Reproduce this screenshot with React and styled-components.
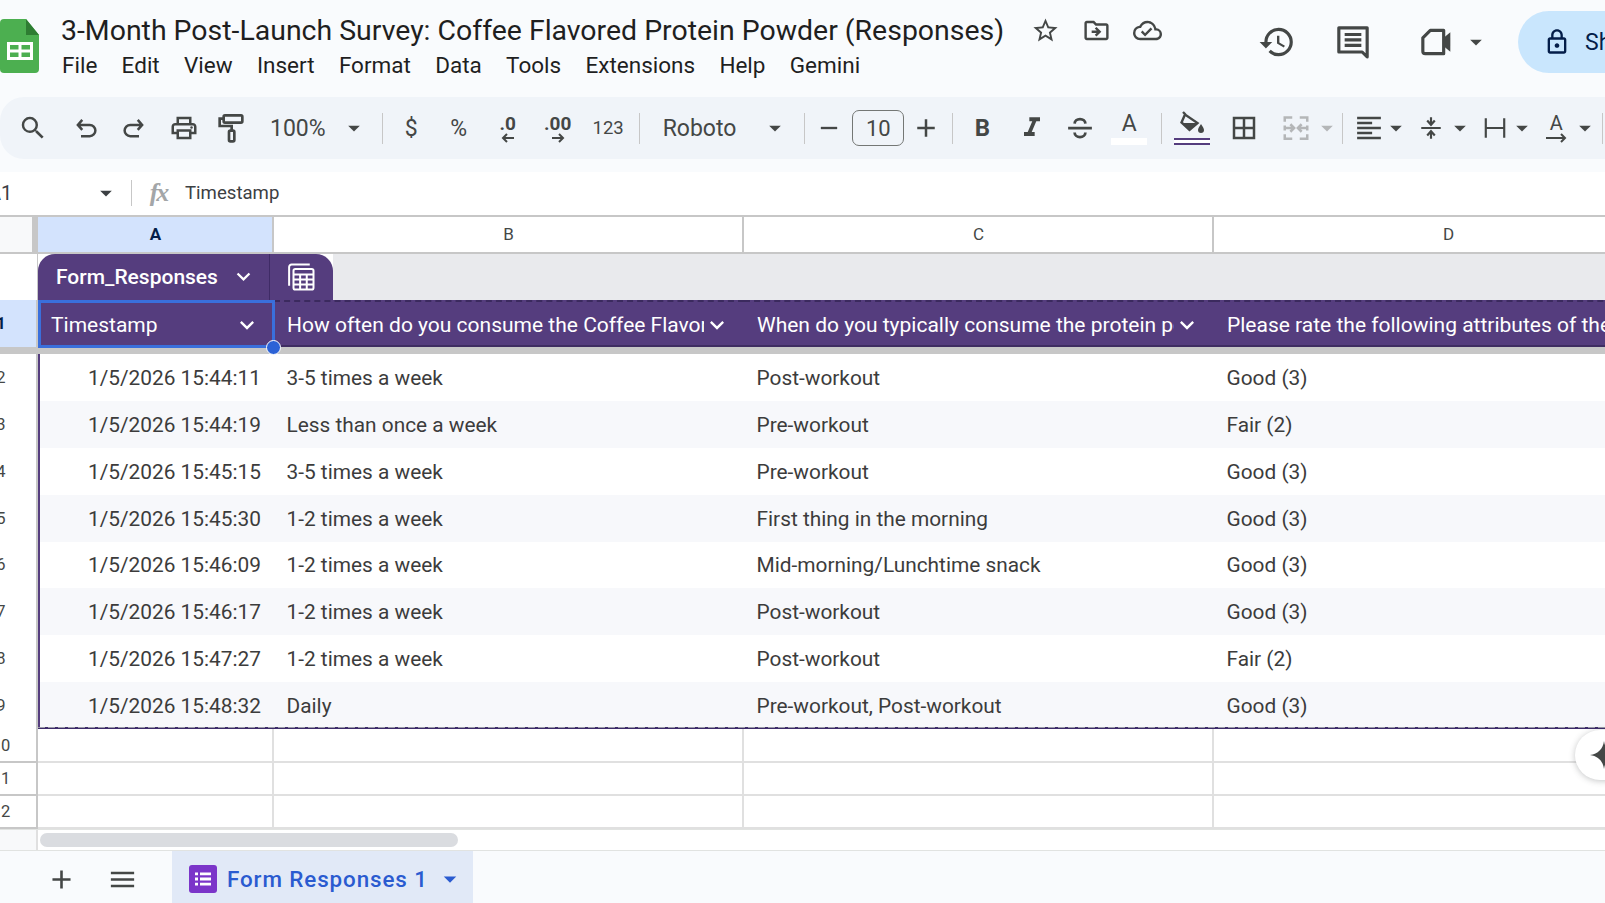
import React from "react";
import styled, { createGlobalStyle } from "styled-components";
import {
  MdSearch, MdOutlinePrint, MdBorderAll, MdFormatItalic, MdHistory, MdStarBorder,
  MdOutlineDriveFileMove, MdOutlineCloudDone, MdOutlineLock, MdAdd, MdMenu, MdArrowDropDown,
  MdKeyboardArrowDown, MdRemove,
} from "react-icons/md";

const INK = "#444746";
const PURPLE = "#553d7e";

const Global = createGlobalStyle`
  html, body { margin: 0; padding: 0; background: #fff; overflow: hidden; }
  * { box-sizing: border-box; }
`;

const Page = styled.div`
  position: relative; width: 1605px; height: 903px; overflow: hidden;
  background: #fff; font-family: Roboto, "Liberation Sans", sans-serif; color: #1f1f1f;
  display: flex; flex-direction: column;
`;

/* ---------- header ---------- */
const Chrome = styled.div`background: #f9fbfd; height: 172px; flex-shrink: 0;`;
const TitleBar = styled.header`display: flex; align-items: flex-start; height: 97px;`;
const Logo = styled.svg`width: 39px; height: 54px; margin-top: 19px; flex-shrink: 0;`;
const TitleColumn = styled.div`margin-left: 22px; padding-top: 9px; flex-shrink: 0;`;
const TitleRow = styled.div`display: flex; align-items: center; height: 42px;`;
const DocTitle = styled.h1`
  margin: 0; font-size: 28.45px; font-weight: 400; color: #1f1f1f; white-space: nowrap;
`;
const TitleIcons = styled.div`display: flex; align-items: center; margin-left: 27px; gap: 22px; color: ${INK}; font-size: 29px;
  svg { display: block; }
`;
const MenuRow = styled.nav`display: flex; gap: 24.300px; font-size: 22.5px; color: #1f1f1f; height: 30px; align-items: center; margin-top: -1px; margin-left: 1px;`;
const MenuItem = styled.span`white-space: nowrap;`;
const Actions = styled.div`
  margin-left: auto; margin-right: -63px; display: flex; align-items: center; height: 62px; margin-top: 11px; flex-shrink: 0; color: ${INK};
`;
const ActionIcon = styled.span`
  display: flex; align-items: center; justify-content: center; width: ${p => p.$w}px; margin-left: ${p => p.$ml || 0}px; font-size: 38px;
  svg { flex-shrink: 0; }
`;
const SharePill = styled.div`
  width: 150px; height: 62px; border-radius: 31px 0 0 31px; background: #c9e6fd; display: flex; align-items: center;
  margin-left: 33px; padding-left: 25px; gap: 14px; color: #041e49; font-size: 23px; font-weight: 400;
`;

/* ---------- toolbar ---------- */
const Toolbar = styled.div`
  display: flex; align-items: center; height: 62px; padding-left: 9px; background: #f0f4f9;
  border-top-left-radius: 24px; border-bottom-left-radius: 24px; white-space: nowrap; color: ${INK};
`;
const Slot = styled.span`
  display: flex; flex-direction: ${p => (p.$stack ? "column" : "row")}; align-items: center; justify-content: center;
  flex-shrink: 0; width: ${p => p.$w}px; height: 62px; font-size: ${p => p.$fs || 30}px; line-height: 1;
  margin-left: ${p => p.$ml || 0}px; padding-left: ${p => p.$pl || 0}px; padding-right: ${p => p.$pr || 0}px;
  color: ${p => (p.$off ? "#b4b6b8" : INK)}; svg { display: block; flex-shrink: 0; }
`;
const SlotText = styled.span`font-size: ${p => p.$fs || 23}px; font-weight: ${p => p.$fw || 400}; color: ${INK}; line-height: 1;`;
const Sep = styled.span`flex-shrink: 0; width: 1px; height: 31px; background: #c7c7c7; margin-left: ${p => p.$ml || 0}px;`;
const FontSizeBox = styled.span`
  flex-shrink: 0; width: 52px; height: 36px; border: 1px solid #747775; border-radius: 7px; display: flex; align-items: center; justify-content: center;
  font-size: 22px; color: ${INK};
`;
const Underline = styled.span`
  display: block; width: 36px; height: 7px; margin-top: 3px;
  border-top: 2px solid ${p => p.$c}; border-bottom: 2px solid ${p => p.$c}; background: #fff;
`;

/* ---------- formula bar ---------- */
const FormulaBar = styled.div`display: flex; align-items: center; height: 43px; flex-shrink: 0; background: #fff; font-size: 18.6px; color: #3c4043; padding-bottom: 1px;`;
const NameBox = styled.div`width: 131px; display: flex; align-items: center; flex-shrink: 0; overflow: hidden;`;
const NameText = styled.span`margin-left: -12px; width: 104px; flex-shrink: 0; font-size: 20px;`;
const FormulaSep = styled.span`width: 1px; height: 26px; background: #c7c7c7; flex-shrink: 0;`;
const Fx = styled.span`
  width: 53px; text-align: center; flex-shrink: 0; font-family: "Liberation Serif", serif; font-style: italic; font-size: 26px; color: #a3a6a8; font-weight: 700; letter-spacing: -2px;
`;

/* ---------- grid ---------- */
const Columns = "38px 236px 470px 470px 470px";
const HeadRow = styled.div`
  display: grid; grid-template-columns: ${Columns}; height: 39px; flex-shrink: 0;
  border-top: 2px solid #c7c7c7; border-bottom: 2px solid #c7c7c7; width: 1684px;
`;
const Corner = styled.div`background: #f8f9fa; border-right: 6px solid #c7c7c7;`;
const ColHead = styled.div`
  display: flex; align-items: center; justify-content: center; font-size: 17px; padding: 0 0 2px 1px;
  background: ${p => (p.$on ? "#d3e3fd" : "#fff")}; color: ${p => (p.$on ? "#041e49" : INK)}; font-weight: ${p => (p.$on ? 700 : 400)};
  border-right: 2px solid #c7c7c7;
`;
const TableStrip = styled.div`display: flex; height: 46px; flex-shrink: 0;`;
const StripGutter = styled.div`width: 38px; flex-shrink: 0; background: #fff; border-right: 1px solid #c7c7c7;`;
const StripFill = styled.div`flex: 1; background: #e9eaed;`;
const TableTab = styled.div`
  display: flex; height: 46px; background: ${PURPLE}; color: #fff; border-radius: 17px 17px 0 0; flex-shrink: 0; width: 295px;
`;
const TabName = styled.div`
  width: 232px; display: flex; align-items: center; padding: 0 0 1px 18px; font-size: 21px; font-weight: 500; border-right: 1px solid #3f2b66; gap: 12px;
  svg { font-size: 27px; flex-shrink: 0; }
`;
const TabCalc = styled.div`flex: 1; display: flex; align-items: center; justify-content: center; padding-right: 2px;`;

const Row = styled.div`
  display: grid; grid-template-columns: ${Columns}; height: ${p => p.$h}px; flex-shrink: 0; width: 1684px;
`;
const RowHead = styled.div`
  display: flex; align-items: center; overflow: hidden; background: ${p => (p.$on ? "#d3e3fd" : "#fff")};
  border-right: 2px solid #c7c7c7; font-size: 16.5px; color: ${p => (p.$on ? "#041e49" : INK)}; font-weight: ${p => (p.$on ? 700 : 400)};
  border-bottom: ${p => (p.$line ? "2px solid #c7c7c7" : "none")};
`;
const RowLabel = styled.span`margin-left: -19px; width: 40px; flex-shrink: 0; text-align: center;`;
const HeaderCell = styled.div`
  display: flex; align-items: center; background: ${PURPLE}; color: #fff; font-size: 21px; padding-left: 13px; padding-top: 3px; min-width: 0;
  border-top: 2px dashed #3b2a5e; border-bottom: 2px solid #3f2d62;
`;
const HeaderLabel = styled.span`flex: 1; overflow: hidden; white-space: nowrap; min-width: 0;`;
const HeaderChevron = styled.span`
  width: 40px; flex-shrink: 0; display: flex; align-items: center; justify-content: center; font-size: 28px; padding-right: 14px; svg { display: block; flex-shrink: 0; }
`;
const Selection = styled.div`
  position: absolute; left: 38px; top: 300px; width: 237px; height: 48px; border: 3px solid #3a6fdc; pointer-events: none;
`;
const SelectionDot = styled.div`
  position: absolute; left: 266px; top: 340px; width: 15px; height: 15px; border-radius: 50%; background: #2c62d6; border: 1.5px solid #fff;
`;
const FreezeBar = styled.div`height: 7px; background: #c7c7c7; flex-shrink: 0;`;
const DataCell = styled.div`
  display: flex; align-items: center; font-size: 20.85px; color: #3c3c3c; white-space: nowrap; overflow: hidden; min-width: 0;
  background: ${p => (p.$alt ? "#f7f8fb" : "#fff")};
  justify-content: ${p => (p.$right ? "flex-end" : "flex-start")};
  padding: 1px ${p => (p.$right ? 13 : 0)}px 0 ${p => (p.$right ? 0 : 12.5)}px;
  border-left: ${p => (p.$edge ? `2px solid ${PURPLE}` : "none")};
`;
const TableEnd = styled.div`
  height: 2px; flex-shrink: 0; margin-left: 38px; margin-top: -2px; position: relative;
  background: linear-gradient(#3d2b6b, #3d2b6b) bottom / 100% 1px no-repeat, repeating-linear-gradient(90deg, #9a9aa5 0 7px, #3d2b6b 7px 10px);
`;
const EmptyCell = styled.div`border-right: 2px solid #e0e0e0; border-bottom: 2px solid #e0e0e0;`;
const ScrollStrip = styled.div`
  display: flex; height: 22px; flex-shrink: 0; border-bottom: 1px solid #e1e3e1; border-top: 1px solid #e1e3e1;
`;
const ScrollGutter = styled.div`width: 38px; background: #f8f9fa; border-right: 2px solid #e0e0e0; flex-shrink: 0;`;
const ScrollThumb = styled.div`width: 418px; height: 14px; margin: 3px 0 0 2px; border-radius: 7px; background: #dadce0;`;
const SheetBar = styled.footer`flex: 1; background: #f9fbfd; display: flex; align-items: stretch; color: ${INK}; padding-left: 31px;`;
const SheetButton = styled.span`width: ${p => p.$w}px; display: flex; align-items: center; justify-content: center; flex-shrink: 0; font-size: 31px; padding-top: 4px; svg { display: block; }`;
const SheetTab = styled.div`
  width: 301px; margin-left: 20px; background: #e1e9f7; display: flex; align-items: center; padding: 3px 0 0 17px; gap: 10px; color: #2a5bd0;
  font-size: 22.4px; font-weight: 500; letter-spacing: 0.9px; white-space: nowrap;
`;
const FormBadge = styled.svg`width: 28px; height: 28px; flex-shrink: 0;`;
const TabCaret = styled.span`display: flex; font-size: 30px; margin-left: -3px;`;
const GeminiFab = styled.div`
  position: absolute; left: 1575px; top: 730px; width: 60px; height: 50px; border-radius: 25px; background: #fff;
  box-shadow: 0 1px 6px rgba(60,64,67,.3); display: flex; align-items: center; padding-left: 15px;
`;

const Glyph = ({ s = 30, sw = 2, children }) => (
  <svg width={s} height={s} viewBox="0 0 24 24" fill="none" stroke="currentColor" strokeWidth={sw}>{children}</svg>
);

const Caret = ({ s = 28 }) => <MdArrowDropDown size={s} />;

const rows = [
  ["1/5/2026 15:44:11", "3-5 times a week", "Post-workout", "Good (3)"],
  ["1/5/2026 15:44:19", "Less than once a week", "Pre-workout", "Fair (2)"],
  ["1/5/2026 15:45:15", "3-5 times a week", "Pre-workout", "Good (3)"],
  ["1/5/2026 15:45:30", "1-2 times a week", "First thing in the morning", "Good (3)"],
  ["1/5/2026 15:46:09", "1-2 times a week", "Mid-morning/Lunchtime snack", "Good (3)"],
  ["1/5/2026 15:46:17", "1-2 times a week", "Post-workout", "Good (3)"],
  ["1/5/2026 15:47:27", "1-2 times a week", "Post-workout", "Fair (2)"],
  ["1/5/2026 15:48:32", "Daily", "Pre-workout, Post-workout", "Good (3)"],
];

const headers = [
  "Timestamp",
  "How often do you consume the Coffee Flavored Protein Powder?",
  "When do you typically consume the protein powder?",
  "Please rate the following attributes of the Coffee Flavored Protein Powder",
];

export default function App() {
  return (
    <Page>
      <Global />
      <Chrome>
        <TitleBar>
          <Logo viewBox="0 0 39 54">
            <path d="M0 4a4 4 0 0 1 4-4h22l13 16v34a4 4 0 0 1-4 4H4a4 4 0 0 1-4-4z" fill="#4caf50" />
            <path d="M26 0l13 16H26z" fill="#2e7d32" />
            <path d="M7 23h26v18H7z" fill="#fff" />
            <path d="M10 26h8.500v4.500H10zM21.500 26H30v4.500h-8.500zM10 33.500h8.500V38H10zM21.500 33.500H30V38h-8.500z" fill="#4caf50" />
          </Logo>
          <TitleColumn>
            <TitleRow>
              <DocTitle>3-Month Post-Launch Survey: Coffee Flavored Protein Powder (Responses)</DocTitle>
              <TitleIcons>
                <MdStarBorder />
                <MdOutlineDriveFileMove />
                <MdOutlineCloudDone />
              </TitleIcons>
            </TitleRow>
            <MenuRow>
              {["File", "Edit", "View", "Insert", "Format", "Data", "Tools", "Extensions", "Help", "Gemini"].map(m => (
                <MenuItem key={m}>{m}</MenuItem>
              ))}
            </MenuRow>
          </TitleColumn>
          <Actions>
            <ActionIcon $w={76}><MdHistory /></ActionIcon>
            <ActionIcon $w={76}>
              <svg width="40" height="40" viewBox="0 0 24 24" fill="none" stroke="currentColor" strokeWidth="1.900">
                <path d="M3.500 3.500h17V21l-3-3h-14z" strokeLinejoin="round" />
                <path d="M7 7.500h10M7 10.700h10M7 14h10" />
              </svg>
            </ActionIcon>
            <ActionIcon $w={60} $ml={16}>
              <svg width="40" height="40" viewBox="0 0 24 24" fill="none" stroke="currentColor" strokeWidth="1.900">
                <path d="M8 5h8v14H5a1.500 1.500 0 0 1-1.500-1.500V9.500z" strokeLinejoin="round" />
                <path d="M16 9.500l4-3.300v11.600l-4-3.300z" fill="currentColor" stroke="none" />
              </svg>
            </ActionIcon>
            <ActionIcon $w={18}><Caret /></ActionIcon>
            <SharePill>
              <MdOutlineLock size={28} style={{ flexShrink: 0 }} />
              Share
            </SharePill>
          </Actions>
        </TitleBar>
        <Toolbar>
          <Slot $w={48}><MdSearch /></Slot>
          <Slot $w={58}>
            <Glyph><path d="M9 5.500L5.500 9.500l3.500 4M5.500 9.500H15a4.500 4.500 0 0 1 0 9H8" /></Glyph>
          </Slot>
          <Slot $w={38}>
            <Glyph><path d="M15 5.500l3.500 4-3.500 4M18.500 9.500H9a4.500 4.500 0 0 0 0 9h7" /></Glyph>
          </Slot>
          <Slot $w={62}><MdOutlinePrint /></Slot>
          <Slot $w={32}>
            <Glyph s={32}>
              <rect x="6.500" y="2.500" width="14" height="5.500" rx="1" />
              <path d="M6.500 5H3.500v5.500h9V14" />
              <rect x="10.500" y="14" width="4" height="8" rx="1" />
            </Glyph>
          </Slot>
          <Slot $w={23} />
          <SlotText>100%</SlotText>
          <Slot $w={56}><Caret /></Slot>
          <Sep />
          <Slot $w={57}><SlotText>$</SlotText></Slot>
          <Slot $w={38}><SlotText>%</SlotText></Slot>
          <Slot $w={60} $stack>
            <SlotText $fs={19} $fw={700}>.0</SlotText>
            <svg width="16" height="10" viewBox="0 0 16 10" fill="none" stroke="currentColor" strokeWidth="2"><path d="M14 5H3M7 1L3 5l4 4" /></svg>
          </Slot>
          <Slot $w={40} $stack>
            <SlotText $fs={19} $fw={700}>.00</SlotText>
            <svg width="16" height="10" viewBox="0 0 16 10" fill="none" stroke="currentColor" strokeWidth="2"><path d="M2 5h11M9 1l4 4-4 4" /></svg>
          </Slot>
          <Slot $w={61}><SlotText $fs={18.5}>123</SlotText></Slot>
          <Sep />
          <Slot $w={23} />
          <SlotText>Roboto</SlotText>
          <Slot $w={68} $pl={10}><Caret /></Slot>
          <Sep />
          <Slot $w={47} $fs={28}><MdRemove /></Slot>
          <FontSizeBox>10</FontSizeBox>
          <Slot $w={48} $pr={4}><MdAdd /></Slot>
          <Sep />
          <Slot $w={58}><SlotText $fs={24} $fw={700}>B</SlotText></Slot>
          <Slot $w={42} $fs={32}><MdFormatItalic /></Slot>
          <Slot $w={54}>
            <Glyph sw={2.200}>
              <path d="M2.500 12h19M7.700 8.500a4.300 3.700 0 0 1 8.600 0M16.300 15.500a4.300 3.700 0 0 1-8.600 0" />
            </Glyph>
          </Slot>
          <Slot $w={54} $pr={10} $stack>
            <SlotText $fs={23}>A</SlotText>
            <Underline $c="#fff" />
          </Slot>
          <Sep />
          <Slot $w={60} $stack>
            <svg width="26" height="24" viewBox="0 0 26 24" fill="currentColor">
              <path d="M4 1l2.500 2.500M6 3.500l-3.500 8 8 7.500 8-7z" fill="none" stroke="currentColor" strokeWidth="2.400" />
              <path d="M3.500 12h14l-7 6.500z" />
              <path d="M22 13c1.500 2.500 3 4.200 3 6a3 3 0 0 1-6 0c0-1.800 1.500-3.500 3-6z" />
            </svg>
            <Underline $c={PURPLE} />
          </Slot>
          <Slot $w={44}><MdBorderAll /></Slot>
          <Slot $w={44} $ml={8} $off>
            <Glyph>
              <path d="M9 3.500H3v3.500M3 10v4M3 17v3.500h6M15 3.500h6v3.500M21 10v4M21 17v3.500h-6M3.500 12H10M7.500 9l3 3-3 3M20.500 12H14M16.500 9l-3 3 3 3" />
            </Glyph>
          </Slot>
          <Slot $w={18} $off><Caret /></Slot>
          <Slot $w={6} />
          <Sep />
          <Slot $w={30} $ml={11}>
            <Glyph>
              <path d="M2.500 4h19M2.500 8h12M2.500 12h19M2.500 16h12M2.500 20h19" />
            </Glyph>
          </Slot>
          <Slot $w={24}><Caret /></Slot>
          <Slot $w={30} $ml={8}>
            <Glyph s={26}>
              <path d="M3 12h18M12 2v6M8.500 5l3.500 4 3.500-4M12 22v-6M8.500 19l3.500-4 3.500 4" />
            </Glyph>
          </Slot>
          <Slot $w={28}><Caret /></Slot>
          <Slot $w={30} $ml={6}>
            <Glyph s={26}>
              <path d="M3.500 3v18M20.500 3v18M3.500 12h17" />
            </Glyph>
          </Slot>
          <Slot $w={24}><Caret /></Slot>
          <Slot $w={30} $ml={7} $stack>
            <SlotText $fs={20}>A</SlotText>
            <svg width="24" height="10" viewBox="0 0 24 10" fill="none" stroke="currentColor" strokeWidth="2"><path d="M2 5h19M17 1l4 4-4 4" /></svg>
          </Slot>
          <Slot $w={28}><Caret /></Slot>
          <Sep $ml={3} />
        </Toolbar>
      </Chrome>
      <FormulaBar>
        <NameBox>
          <NameText>A1</NameText>
          <Caret />
        </NameBox>
        <FormulaSep />
        <Fx>fx</Fx>
        Timestamp
      </FormulaBar>
      <HeadRow>
        <Corner />
        <ColHead $on>A</ColHead>
        <ColHead>B</ColHead>
        <ColHead>C</ColHead>
        <ColHead>D</ColHead>
      </HeadRow>
      <TableStrip>
        <StripGutter />
        <TableTab>
          <TabName>Form_Responses <MdKeyboardArrowDown /></TabName>
          <TabCalc>
            <svg width="30" height="30" viewBox="0 0 24 24" fill="none" stroke="#fff" strokeWidth="1.600">
              <path d="M2.500 19V4a2 2 0 0 1 2-2H19" />
              <rect x="6" y="5.500" width="16" height="16.500" rx="1.500" />
              <path d="M6 10h16M6 14h16M6 18h16M11.300 10v12M16.600 10v12" />
            </svg>
          </TabCalc>
        </TableTab>
        <StripFill />
      </TableStrip>
      <Row $h={47}>
        <RowHead $on><RowLabel>1</RowLabel></RowHead>
        {headers.map(h => (
          <HeaderCell key={h}>
            <HeaderLabel>{h}</HeaderLabel>
            <HeaderChevron><MdKeyboardArrowDown /></HeaderChevron>
          </HeaderCell>
        ))}
      </Row>
      <FreezeBar />
      {rows.map((r, i) => (
        <Row key={r[0]} $h={46.875}>
          <RowHead><RowLabel>{i + 2}</RowLabel></RowHead>
          <DataCell $right $edge $alt={i % 2 === 1}>{r[0]}</DataCell>
          <DataCell $alt={i % 2 === 1}>{r[1]}</DataCell>
          <DataCell $alt={i % 2 === 1}>{r[2]}</DataCell>
          <DataCell $alt={i % 2 === 1}>{r[3]}</DataCell>
        </Row>
      ))}
      <TableEnd />
      {[10, 11, 12].map(n => (
        <Row key={n} $h={n === 10 ? 34 : 33}>
          <RowHead $line><RowLabel>{n}</RowLabel></RowHead>
          <EmptyCell /><EmptyCell /><EmptyCell /><EmptyCell />
        </Row>
      ))}
      <ScrollStrip>
        <ScrollGutter />
        <ScrollThumb />
      </ScrollStrip>
      <SheetBar>
        <SheetButton $w={61}><MdAdd /></SheetButton>
        <SheetButton $w={60}><MdMenu /></SheetButton>
        <SheetTab>
          <FormBadge viewBox="0 0 28 28">
            <rect width="28" height="28" rx="3" fill="#7b35c9" />
            <path d="M11 7.500h11v2.800H11zM11 12.600h11v2.800H11zM11 17.700h11v2.800H11zM6 7.500h3v2.800H6zM6 12.600h3v2.800H6zM6 17.700h3v2.800H6z" fill="#fff" />
          </FormBadge>
          Form Responses 1
          <TabCaret><MdArrowDropDown /></TabCaret>
        </SheetTab>
      </SheetBar>
      <Selection />
      <SelectionDot />
      <GeminiFab>
        <svg width="28" height="28" viewBox="0 0 24 24" fill="#444746"><path d="M12 0c1 7 5 11 12 12-7 1-11 5-12 12-1-7-5-11-12-12 7-1 11-5 12-12z" /></svg>
      </GeminiFab>
    </Page>
  );
}
